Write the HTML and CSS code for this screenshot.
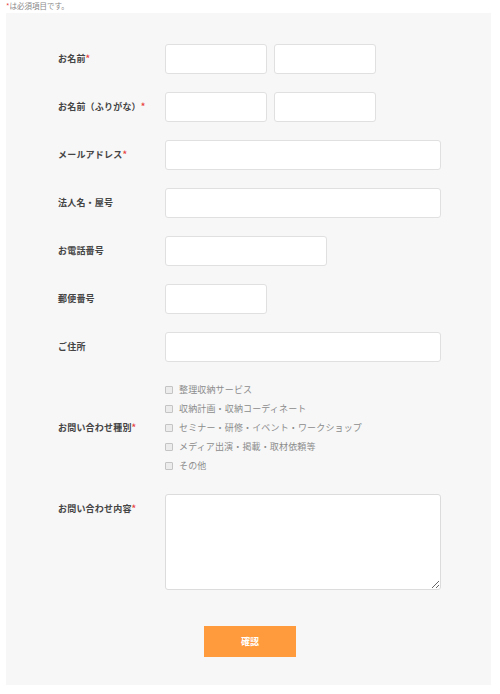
FILE: index.html
```html
<!DOCTYPE html>
<html lang="ja">
<head>
<meta charset="utf-8">
<title>お問い合わせ</title>
<link rel="stylesheet" href="styles.css">
</head>
<body>
<p class="note"><span class="req">*</span>は必須項目です。</p>
<form class="panel">
  <div class="row">
    <label class="label">お名前<span class="req">*</span></label>
    <div class="field pair"><input class="input w-half" type="text"><input class="input w-half" type="text"></div>
  </div>
  <div class="row">
    <label class="label">お名前（ふりがな）<span class="req">*</span></label>
    <div class="field pair"><input class="input w-half" type="text"><input class="input w-half" type="text"></div>
  </div>
  <div class="row">
    <label class="label">メールアドレス<span class="req">*</span></label>
    <div class="field"><input class="input w-full" type="text"></div>
  </div>
  <div class="row">
    <label class="label">法人名・屋号</label>
    <div class="field"><input class="input w-full" type="text"></div>
  </div>
  <div class="row">
    <label class="label">お電話番号</label>
    <div class="field"><input class="input w-mid" type="text"></div>
  </div>
  <div class="row">
    <label class="label">郵便番号</label>
    <div class="field"><input class="input w-half" type="text"></div>
  </div>
  <div class="row">
    <label class="label">ご住所</label>
    <div class="field"><input class="input w-full" type="text"></div>
  </div>
  <div class="row">
    <label class="label">お問い合わせ種別<span class="req">*</span></label>
    <div class="field checks">
      <label class="check"><input type="checkbox" class="box">整理収納サービス</label>
      <label class="check"><input type="checkbox" class="box">収納計画・収納コーディネート</label>
      <label class="check"><input type="checkbox" class="box">セミナー・研修・イベント・ワークショップ</label>
      <label class="check"><input type="checkbox" class="box">メディア出演・掲載・取材依頼等</label>
      <label class="check"><input type="checkbox" class="box">その他</label>
    </div>
  </div>
  <div class="row row-top">
    <label class="label label-top">お問い合わせ内容<span class="req">*</span></label>
    <div class="field"><textarea class="textarea"></textarea></div>
  </div>
  <div class="actions">
    <button type="button" class="submit">確認</button>
  </div>
</form>
</body>
</html>
```
FILE: styles.css
```css
* { box-sizing: border-box; }
html, body { margin: 0; padding: 0; background: #ffffff; }
body {
  font-family: "Noto Sans CJK JP", "Noto Sans", sans-serif;
  color: #333;
  width: 500px;
}
.note {
  margin: 0;
  padding: 1px 0 0 6px;
  height: 13px;
  font-size: 7.5px;
  line-height: 10px;
  color: #888;
}
.req { color: #e8463f; }
.panel {
  margin: 0 0 0 6px;
  width: 485px;
  background: #f7f7f7;
  padding: 31px 0 28px 52px;
  display: flex;
  flex-direction: column;
  gap: 18px;
}
.row {
  display: grid;
  grid-template-columns: 107px 1fr;
  align-items: center;
}
.row-top { align-items: start; }
.label {
  font-size: 9px;
  font-weight: bold;
  color: #444;
  letter-spacing: 0.2px;
  line-height: 14px;
}
.label-top { padding-top: 9px; }
.field { display: flex; }
.pair { gap: 7px; }
.input {
  height: 30px;
  background: #fff;
  border: 1px solid #e0e0e0;
  border-radius: 3px;
  padding: 0 6px;
  font: inherit;
  outline: none;
}
.w-half { width: 102px; }
.w-mid { width: 162px; }
.w-full { width: 276px; }
.checks {
  flex-direction: column;
}
.check {
  display: flex;
  align-items: center;
  height: 19px;
  font-size: 9px;
  color: #8c8c8c;
  letter-spacing: 0.15px;
}
.box {
  appearance: none;
  -webkit-appearance: none;
  width: 8px;
  height: 8px;
  margin: 0 6px 0 0;
  border: 1px solid #c4c4c4;
  border-radius: 1px;
  background: #ececec;
}
.textarea {
  width: 276px;
  height: 96px;
  background: #fff;
  border: 1px solid #dcdcdc;
  border-radius: 3px;
  font: inherit;
  outline: none;
  margin: 1px 0 0 0;
  display: block;
}
.actions {
  padding: 18px 0 0 146px;
}
.submit {
  width: 92px;
  height: 31px;
  border: none;
  background: #ff9a3d;
  color: #fff;
  font-family: "Noto Sans CJK JP", sans-serif;
  font-size: 9px;
  font-weight: bold;
  padding: 0;
  display: block;
}
```
